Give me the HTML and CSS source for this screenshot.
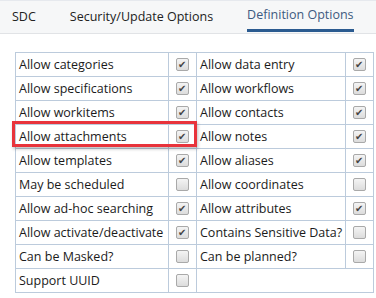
FILE: index.html
```html
<!DOCTYPE html>
<html lang="en">
<head>
    <meta charset="UTF-8">
    <title>Definition Options</title>
    <link rel="stylesheet" href="styles.css">
</head>
<body>

<div class="tabs">
    <div class="tab">SDC</div>
    <div class="tab">Security/Update Options</div>
    <div class="tab active">Definition Options</div>
</div>

<div class="content">
    <table class="options">
        <tr>
            <td class="label">Allow categories</td><td class="check"><span class="box on"></span></td>
            <td class="label">Allow data entry</td><td class="check"><span class="box on"></span></td>
        </tr>
        <tr>
            <td class="label">Allow specifications</td><td class="check"><span class="box on"></span></td>
            <td class="label">Allow workflows</td><td class="check"><span class="box on"></span></td>
        </tr>
        <tr>
            <td class="label">Allow workitems</td><td class="check"><span class="box on"></span></td>
            <td class="label">Allow contacts</td><td class="check"><span class="box on"></span></td>
        </tr>
        <tr>
            <td class="label">Allow attachments</td><td class="check"><span class="box on"></span></td>
            <td class="label">Allow notes</td><td class="check"><span class="box on"></span></td>
        </tr>
        <tr>
            <td class="label">Allow templates</td><td class="check"><span class="box on"></span></td>
            <td class="label">Allow aliases</td><td class="check"><span class="box on"></span></td>
        </tr>
        <tr>
            <td class="label">May be scheduled</td><td class="check"><span class="box"></span></td>
            <td class="label">Allow coordinates</td><td class="check"><span class="box"></span></td>
        </tr>
        <tr>
            <td class="label">Allow ad-hoc searching</td><td class="check"><span class="box on"></span></td>
            <td class="label">Allow attributes</td><td class="check"><span class="box on"></span></td>
        </tr>
        <tr>
            <td class="label">Allow activate/deactivate</td><td class="check"><span class="box on"></span></td>
            <td class="label">Contains Sensitive Data?</td><td class="check"><span class="box"></span></td>
        </tr>
        <tr>
            <td class="label">Can be Masked?</td><td class="check"><span class="box"></span></td>
            <td class="label">Can be planned?</td><td class="check"><span class="box"></span></td>
        </tr>
        <tr>
            <td class="label">Support UUID</td><td class="check"><span class="box"></span></td>
            <td class="empty" colspan="2"></td>
        </tr>
    </table>
    <!-- 注目枠 -->
    <div class="highlight"></div>
</div>

</body>
</html>
```

FILE: styles.css
```css
body {
    margin: 0;
    font-family: "Open Sans", "Noto Sans", sans-serif;
    font-size: 12.5px;
    color: #1b1b1b;
    background-color: #fff;
}

/* タブ */
.tabs {
    display: flex;
    height: 32px;
    background-color: #f6f7f8;
    border-top: 1px solid #e6e9ee;
    border-bottom: 1px solid #e1e3e6;
    padding-left: 12px;
    gap: 34px;
}
.tab {
    line-height: 31px;
    color: #222;
    position: relative;
}
.tab.active {
    color: #3d5a80;
    line-height: 28px;
}
.tab.active::after {
    content: "";
    position: absolute;
    left: 0;
    right: 0;
    top: 28px;
    height: 3px;
    background-color: #2b5b90;
}

.content {
    position: relative;
    padding: 18px 0 0 15px;
}

/* 設定テーブル */
.options {
    border-collapse: collapse;
    width: 357px;
    table-layout: fixed;
}
.options td {
    border: 1px solid #bccbdc;
    height: 23px;
    line-height: 16px;
    padding: 0;
}
.options td.label {
    padding-left: 3px;
    white-space: nowrap;
}
.options tr td:nth-child(1) { width: 149px; }
.options tr td:nth-child(2) { width: 27px; }
.options tr td:nth-child(3) { width: 145px; }
.options tr td:nth-child(4) { width: 27px; }
.options td.check {
    text-align: center;
    vertical-align: middle;
}

.box {
    display: inline-block;
    width: 11px;
    height: 11px;
    margin-bottom: 2px;
    border: 1px solid #a9a9a9;
    border-radius: 2px;
    background: linear-gradient(#f4f4f4, #dcdcdc);
    position: relative;
    vertical-align: middle;
}
.box.on::after {
    content: "\2714";
    position: absolute;
    left: 1px;
    top: -2px;
    font-size: 10px;
    color: #444;
    font-family: "DejaVu Sans", sans-serif;
}

.highlight {
    position: absolute;
    left: 12px;
    top: 87px;
    width: 179px;
    height: 20px;
    border: 3px solid #e8333b;
    box-shadow: 1px 2px 3px rgba(0,0,0,0.25);
}
```
